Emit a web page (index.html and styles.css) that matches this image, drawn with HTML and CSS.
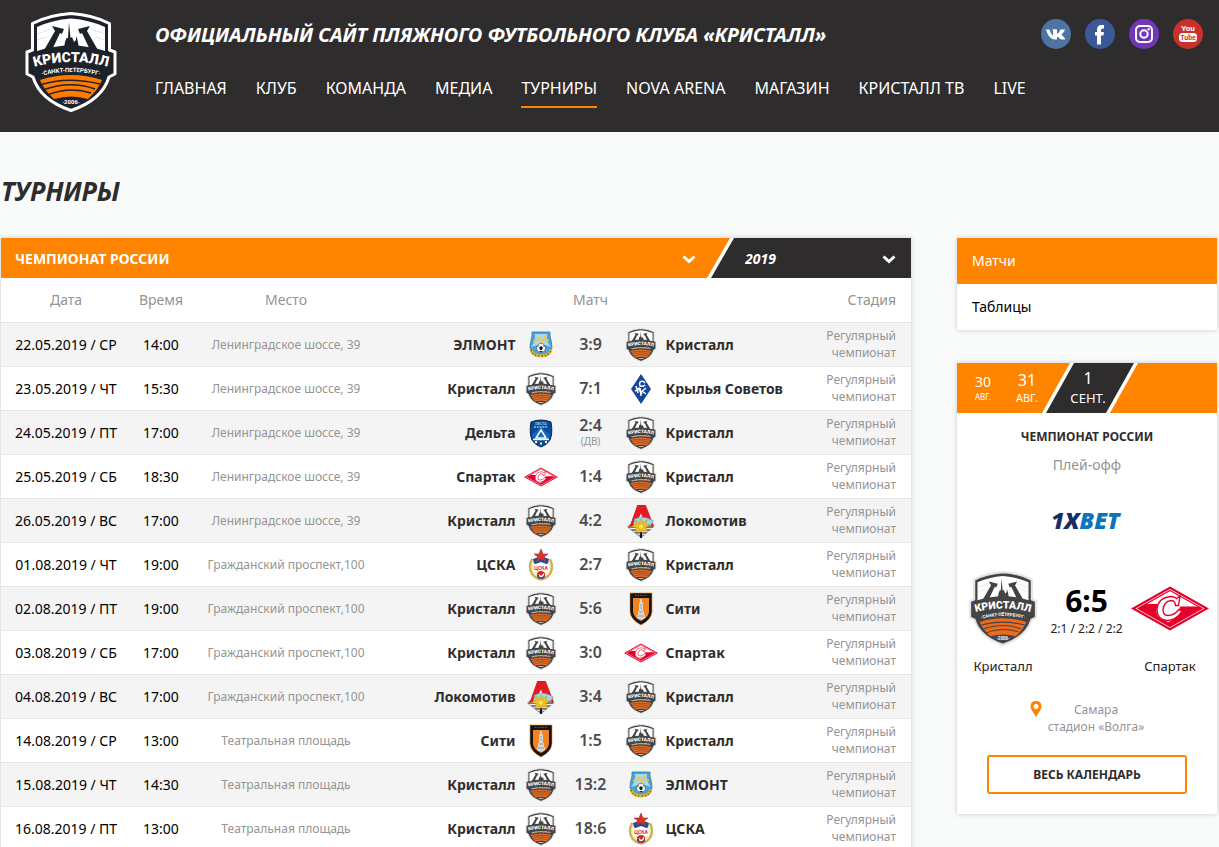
FILE: index.html
```html
<!DOCTYPE html>
<html lang="ru">
<head>
  <meta charset="UTF-8">
  <meta name="viewport" content="width=device-width, initial-scale=1.0">
  <title>Турниры</title>
  <link rel="stylesheet" href="styles.css">
</head>
<body>

<!-- club logos -->
<svg class="sprite" aria-hidden="true">
  <symbol id="kristall" viewBox="0 0 92 100">
    <path d="M46 1.500 Q24 3 7.500 11.500 L7.500 38 L2 40 L2 62 L8 65 Q15 88 46 98.500 Q77 88 84 65 L90 62 L90 40 L84.500 38 L84.500 11.500 Q68 3 46 1.500Z" fill="currentColor" stroke="var(--rim)" stroke-width="3" stroke-linejoin="round"/>
    <path d="M46 6.500 Q27 8 12 15 L12 39 Q46 28 80 39 L80 15 Q65 8 46 6.500Z" fill="#fff"/>
    <path d="M12 22 L26 17 M12 28 L22 25 M80 22 L66 17 M80 28 L70 25" stroke="#ddd" stroke-width=".8"/>
    <path d="M27 14 L39 17 L37 22 L35 21 L27 38 L18 40 L30 19Z M65 14 L53 17 L55 22 L57 21 L65 38 L74 40 L62 19Z" fill="currentColor"/>
    <path d="M39 36 L40 30 L41.500 26 L43 26 L44 10 L45.500 26 L47 25 L49 30 L51 28 L51 24 L52.500 28 L54 36Z" fill="currentColor"/>
    <path id="arc-name" d="M5 56 Q46 44 87 56" fill="none"/>
    <path id="arc-city" d="M12 65 Q46 55 80 65" fill="none"/>
    <text class="crest-name"><textPath href="#arc-name" startOffset="50%">КРИСТАЛЛ</textPath></text>
    <text class="crest-city"><textPath href="#arc-city" startOffset="50%">·САНКТ-ПЕТЕРБУРГ·</textPath></text>
    <path d="M15 68 Q46 58 77 68 Q73 78 63 87 Q46 82 29 87 Q19 78 15 68Z" fill="var(--sand)"/>
    <path d="M15 73 Q42 64 75 72 M18 78 Q45 68 70 77 M22 83 Q45 74 66 81" fill="none" stroke="currentColor" stroke-width="1.500"/>
    <text class="crest-year" x="46" y="92">·2006·</text>
  </symbol>

  <symbol id="spartak" viewBox="0 0 78 44">
    <path d="M39 0 L78 22 L39 44 L0 22Z" fill="#e4002b"/>
    <path d="M39 2.500 L73.500 22 L39 41.500 L4.500 22Z" fill="#fff"/>
    <path d="M39 4 L71 22 L39 40 L7 22Z" fill="none" stroke="#e4002b" stroke-width="1.200"/>
    <path d="M15 17.500 H27 Q23 27 29 32 L36 35 L39 40 L7 22Z M49 20 L68 20 L71 22 L39 40 L33 36.500 Q46 35 49 20Z" fill="#e4002b"/>
    <path d="M49 9.500 L47.500 19 L44.500 19 Q44 14 40 14 Q33 15 32 23 Q32 29 37 29 Q43 29 48 23 L51 25 Q45 34 36 34 Q26 33 26 23 Q27 11 40 10 Q43 10 45.500 12Z" fill="#fff" stroke="#e4002b" stroke-width="1.400"/>
  </symbol>

  <symbol id="elmont" viewBox="0 0 30 34">
    <path d="M6 4 L24 4 L24 8 Q26 15 26 20 L21 28 L9 28 L4 20 Q4 15 6 8Z" fill="#4aa3d8" stroke="#2f78a8" stroke-width=".8"/>
    <path d="M9 6 H21 Q20 13 25 19 Q17 15 5 19 Q10 13 9 6Z" fill="#a6d8f2"/>
    <path d="M7 13 L11 12 L13 9 L16 15 L19 8 L20 12 L23 12" fill="none" stroke="#f3c928" stroke-width="1.300"/>
    <circle cx="15" cy="20" r="4.500" fill="#fff" stroke="#222" stroke-width=".5"/>
    <path d="M15 18 L17 19.500 L16 22 H14 L13 19.500Z M11 18 L13 17 L12 19Z M19 18 L17 17 L18 19Z M13 24 L14 23 H16 L17 24Z" fill="#222"/>
    <path d="M5 22 Q7 28 15 28 Q23 28 25 22" fill="none" stroke="#e5b92e" stroke-width="3"/>
    <path d="M5 22 Q7 28 15 28 Q23 28 25 22" fill="none" stroke="#554a20" stroke-width="1.200" stroke-dasharray="1.200 2"/>
  </symbol>

  <symbol id="krylya" viewBox="0 0 30 34">
    <path d="M15 2 L25 17 L15 32 L5 17Z" fill="#13479f"/>
    <path d="M19 11 Q17 8 14 10 Q13 12 14 14 Q17 15 19 13 M10 14 L12 21 M12 16 L16 22 M9 19 L14 16 M14 16 L15 24 M15 20 L20 16 M16 19 L20 22" fill="none" stroke="#fff" stroke-width="1.500"/>
  </symbol>

  <symbol id="delta" viewBox="0 0 30 34">
    <path d="M5 6 Q15 2 25 6 Q27 17 24 24 Q21 29 15 31 Q9 29 6 24 Q3 17 5 6Z" fill="#0a4a98" stroke="#06264f"/>
    <path d="M6 18 Q11 16 15 10 Q20 17 24 18 L23 23 H7Z" fill="#1668b8"/>
    <text class="crest-delta" x="15" y="9">DELTA</text>
    <path d="M8 11 H22" stroke="#8fc3ee" stroke-width="1.500" stroke-dasharray="2 .8"/>
    <path d="M15 14 L20 22 H10Z" fill="none" stroke="#fff" stroke-width="1.500"/>
    <path d="M7 23.500 H23" stroke="#fff" stroke-width="1.500"/>
    <path d="M9 26 H11 M14 27.500 H16 M19 26 H21" stroke="#fff" stroke-width="1.800"/>
  </symbol>

  <symbol id="lokomotiv" viewBox="0 0 30 36">
    <path d="M11 1 H20 L29 24 H20 L15 10 L10 20 L8 24 H1 L4 21Z" fill="#e21a22"/>
    <path d="M0 24 L11 23 H20 L29 24 L15 36Z" fill="#75787b"/>
    <path d="M3 26 H27 M7 29 H23 M11 32 H19" stroke="#fff"/>
    <path d="M8 16 Q18 11 28 18 L25 23 H7Z" fill="#9bd8e7" stroke="#5d9aae" stroke-width=".6"/>
    <path d="M15 16 L17 20 L21 17 L20 22 L25 22 L20 25 L22 29 L17 28 L15 32 L13 28 L9 30 L10 25 L5 24 L10 21 L9 17 L13 20Z" fill="#f5c21c" stroke="#c98a12" stroke-width=".5"/>
    <circle cx="15" cy="24" r="3" fill="#ffe15a" stroke="#b77d10" stroke-width=".5"/>
    <path d="M15 30 V36" stroke="#111" stroke-width="2"/>
  </symbol>

  <symbol id="cska" viewBox="0 0 30 34">
    <path d="M6 11 Q2 19 6 26 Q9 30 15 31.500 Q21 30 24 26 Q28 19 24 11" fill="#f6edc2" stroke="#d9bc62" stroke-width="2.500"/>
    <path d="M6 11 Q2 19 6 26 Q9 30 15 31.500 Q21 30 24 26 Q28 19 24 11" fill="none" stroke="#a8832a" stroke-dasharray="1 1.500"/>
    <path d="M7 11 L15 8 L23 11 L22 15 L15 21 L8 15Z" fill="#17509c"/>
    <path d="M7 17 L15 14 L23 17 V24 H7Z" fill="#fff"/>
    <path d="M15 1 L17 6 H22 L18 9 L20 14 L15 11 L10 14 L12 9 L8 6 H13Z" fill="#dd2f25" stroke="#8f3a30" stroke-width=".6"/>
    <text class="crest-cska" x="15" y="22">ЦСКА</text>
    <circle cx="15" cy="27" r="4" fill="#d9252a"/>
    <path d="M12 29 L13 26 L15 28 L18 25 V29Z" fill="#fff"/>
    <path d="M11 27 Q11 30 14 31 L13 27Z M19 27 Q19 30 16 31 L17 28Z" fill="#17509c"/>
  </symbol>

  <symbol id="city" viewBox="0 0 30 34">
    <path d="M4 1 H26 V20 Q25 28 15 33 Q5 28 4 20Z" fill="#151515" stroke="#f0821e" stroke-width=".6"/>
    <path d="M7 6 H23 V20 Q22 26 15 29 Q8 26 7 20Z" fill="#f58220"/>
    <path d="M9 3.500 H21" stroke="#655" stroke-dasharray="1.500 1"/>
    <path d="M14 7 H16 V10 L17 11 V19 H18 V23 H19 V26 L15 28 L11 26 V23 H12 V19 H13 V11 L14 10Z" fill="#d9d9d9"/>
    <path d="M14 13 H16 M14 16 H16 M13 20 H17 M12 24 H18" stroke="#777" stroke-width=".7"/>
  </symbol>

  <symbol id="chevron" viewBox="0 0 14 9">
    <path d="M1.500 1.500 L7 6.500 L12.500 1.500" fill="none" stroke="#fff" stroke-width="3"/>
  </symbol>
</svg>

<header class="header">
  <a href="#" class="logo" aria-label="Кристалл">
    <svg><use href="#kristall"/></svg>
  </a>
  <div class="header-body">
    <div class="header-top">
      <p class="slogan">ОФИЦИАЛЬНЫЙ САЙТ ПЛЯЖНОГО ФУТБОЛЬНОГО КЛУБА «КРИСТАЛЛ»</p>
      <div class="social">
        <a href="#" aria-label="ВКонтакте">
          <svg viewBox="0 0 30 30">
            <circle cx="15" cy="15" r="15" fill="#4c75a3"/>
            <path d="M5 10.500 H8.500 C9.500 14 11 16 12 16.500 V12.500 C12 11.500 11.500 11 11 10.800 C11.500 10 15.500 10 16 10.500 V15 C17.500 14.500 18.500 12 19.500 10.500 H23.300 C24.500 10.500 23.500 12.500 20.500 15.500 C21.500 17 24.500 19 24 20.500 H20.500 C19 20.500 17.800 18 16 17.800 V20.500 H14 C9.500 20.500 6.500 16 5 10.500Z" fill="#fff"/>
          </svg>
        </a>
        <a href="#" aria-label="Facebook">
          <svg viewBox="0 0 30 30">
            <circle cx="15" cy="15" r="15" fill="#3b5998"/>
            <path d="M19 6 V9.500 H17.500 Q16 9.500 16 11 V13 H19 L18.500 16.500 H16 V25.500 H12 V16.500 H10 V13 H12 V10.500 Q12 6 16.500 6Z" fill="#fff"/>
          </svg>
        </a>
        <a href="#" aria-label="Instagram">
          <svg viewBox="0 0 30 30">
            <circle cx="15" cy="15" r="15" fill="#7038b8"/>
            <rect x="7" y="7" width="16" height="16" rx="4" fill="none" stroke="#fff" stroke-width="2"/>
            <circle cx="15" cy="15" r="3.700" fill="none" stroke="#fff" stroke-width="2"/>
            <circle cx="19.700" cy="10.300" r="1.200" fill="#fff"/>
          </svg>
        </a>
        <a href="#" aria-label="YouTube">
          <svg viewBox="0 0 30 30">
            <circle cx="15" cy="15" r="15" fill="#c8312b"/>
            <text class="yt-you" x="15" y="12">You</text>
            <rect x="6" y="14" width="18" height="9" rx="3.500" fill="#fff"/>
            <text class="yt-tube" x="15" y="21">Tube</text>
          </svg>
        </a>
      </div>
    </div>
    <nav class="nav">
      <a href="#">ГЛАВНАЯ</a>
      <a href="#">КЛУБ</a>
      <a href="#">КОМАНДА</a>
      <a href="#">МЕДИА</a>
      <a href="#" class="active">ТУРНИРЫ</a>
      <a href="#">NOVA ARENA</a>
      <a href="#">МАГАЗИН</a>
      <a href="#">КРИСТАЛЛ ТВ</a>
      <a href="#">LIVE</a>
    </nav>
  </div>
</header>

<div class="container">
  <h1>ТУРНИРЫ</h1>
  <div class="columns">
    <main class="games">
      <div class="filters">
        <div class="filter filter-cup">
          <select aria-label="Турнир"><option>ЧЕМПИОНАТ РОССИИ</option></select>
          <svg><use href="#chevron"/></svg>
        </div>
        <div class="filter filter-year">
          <select aria-label="Сезон"><option>2019</option></select>
          <svg><use href="#chevron"/></svg>
        </div>
      </div>
      <table>
        <colgroup>
          <col class="col-date"><col class="col-time"><col class="col-place">
          <col><col class="col-logo"><col class="col-logo"><col class="col-logo"><col>
          <col class="col-stage">
        </colgroup>
        <thead>
          <tr><th>Дата</th><th>Время</th><th>Место</th><th colspan="5">Матч</th><th class="stage">Стадия</th></tr>
        </thead>
        <tbody>
          <tr>
            <td>22.05.2019 / СР</td><td>14:00</td><td class="place">Ленинградское шоссе, 39</td>
            <td class="team home">ЭЛМОНТ</td><td><svg class="crest"><use href="#elmont"/></svg></td>
            <td class="score">3:9</td>
            <td><svg class="crest"><use href="#kristall"/></svg></td><td class="team">Кристалл</td>
            <td class="stage">Регулярный чемпионат</td>
          </tr>
          <tr>
            <td>23.05.2019 / ЧТ</td><td>15:30</td><td class="place">Ленинградское шоссе, 39</td>
            <td class="team home">Кристалл</td><td><svg class="crest"><use href="#kristall"/></svg></td>
            <td class="score">7:1</td>
            <td><svg class="crest"><use href="#krylya"/></svg></td><td class="team">Крылья Советов</td>
            <td class="stage">Регулярный чемпионат</td>
          </tr>
          <tr>
            <td>24.05.2019 / ПТ</td><td>17:00</td><td class="place">Ленинградское шоссе, 39</td>
            <td class="team home">Дельта</td><td><svg class="crest"><use href="#delta"/></svg></td>
            <td class="score">2:4<small>(ДВ)</small></td>
            <td><svg class="crest"><use href="#kristall"/></svg></td><td class="team">Кристалл</td>
            <td class="stage">Регулярный чемпионат</td>
          </tr>
          <tr>
            <td>25.05.2019 / СБ</td><td>18:30</td><td class="place">Ленинградское шоссе, 39</td>
            <td class="team home">Спартак</td><td><svg class="crest"><use href="#spartak"/></svg></td>
            <td class="score">1:4</td>
            <td><svg class="crest"><use href="#kristall"/></svg></td><td class="team">Кристалл</td>
            <td class="stage">Регулярный чемпионат</td>
          </tr>
          <tr>
            <td>26.05.2019 / ВС</td><td>17:00</td><td class="place">Ленинградское шоссе, 39</td>
            <td class="team home">Кристалл</td><td><svg class="crest"><use href="#kristall"/></svg></td>
            <td class="score">4:2</td>
            <td><svg class="crest"><use href="#lokomotiv"/></svg></td><td class="team">Локомотив</td>
            <td class="stage">Регулярный чемпионат</td>
          </tr>
          <tr>
            <td>01.08.2019 / ЧТ</td><td>19:00</td><td class="place">Гражданский проспект,100</td>
            <td class="team home">ЦСКА</td><td><svg class="crest"><use href="#cska"/></svg></td>
            <td class="score">2:7</td>
            <td><svg class="crest"><use href="#kristall"/></svg></td><td class="team">Кристалл</td>
            <td class="stage">Регулярный чемпионат</td>
          </tr>
          <tr>
            <td>02.08.2019 / ПТ</td><td>19:00</td><td class="place">Гражданский проспект,100</td>
            <td class="team home">Кристалл</td><td><svg class="crest"><use href="#kristall"/></svg></td>
            <td class="score">5:6</td>
            <td><svg class="crest"><use href="#city"/></svg></td><td class="team">Сити</td>
            <td class="stage">Регулярный чемпионат</td>
          </tr>
          <tr>
            <td>03.08.2019 / СБ</td><td>17:00</td><td class="place">Гражданский проспект,100</td>
            <td class="team home">Кристалл</td><td><svg class="crest"><use href="#kristall"/></svg></td>
            <td class="score">3:0</td>
            <td><svg class="crest"><use href="#spartak"/></svg></td><td class="team">Спартак</td>
            <td class="stage">Регулярный чемпионат</td>
          </tr>
          <tr>
            <td>04.08.2019 / ВС</td><td>17:00</td><td class="place">Гражданский проспект,100</td>
            <td class="team home">Локомотив</td><td><svg class="crest"><use href="#lokomotiv"/></svg></td>
            <td class="score">3:4</td>
            <td><svg class="crest"><use href="#kristall"/></svg></td><td class="team">Кристалл</td>
            <td class="stage">Регулярный чемпионат</td>
          </tr>
          <tr>
            <td>14.08.2019 / СР</td><td>13:00</td><td class="place">Театральная площадь</td>
            <td class="team home">Сити</td><td><svg class="crest"><use href="#city"/></svg></td>
            <td class="score">1:5</td>
            <td><svg class="crest"><use href="#kristall"/></svg></td><td class="team">Кристалл</td>
            <td class="stage">Регулярный чемпионат</td>
          </tr>
          <tr>
            <td>15.08.2019 / ЧТ</td><td>14:30</td><td class="place">Театральная площадь</td>
            <td class="team home">Кристалл</td><td><svg class="crest"><use href="#kristall"/></svg></td>
            <td class="score">13:2</td>
            <td><svg class="crest"><use href="#elmont"/></svg></td><td class="team">ЭЛМОНТ</td>
            <td class="stage">Регулярный чемпионат</td>
          </tr>
          <tr>
            <td>16.08.2019 / ПТ</td><td>13:00</td><td class="place">Театральная площадь</td>
            <td class="team home">Кристалл</td><td><svg class="crest"><use href="#kristall"/></svg></td>
            <td class="score">18:6</td>
            <td><svg class="crest"><use href="#cska"/></svg></td><td class="team">ЦСКА</td>
            <td class="stage">Регулярный чемпионат</td>
          </tr>
        </tbody>
      </table>
    </main>

    <aside class="sidebar">
      <nav class="side-menu">
        <a href="#" class="active">Матчи</a>
        <a href="#">Таблицы</a>
      </nav>

      <section class="match-card">
        <div class="days">
          <button type="button" class="day day-far"><b>30</b>АВГ.</button>
          <button type="button" class="day"><b>31</b>АВГ.</button>
          <button type="button" class="day day-active"><b>1</b>СЕНТ.</button>
        </div>
        <h2>ЧЕМПИОНАТ РОССИИ</h2>
        <p class="round">Плей-офф</p>
        <svg class="sponsor" viewBox="0 0 72 20">
          <text x="0" y="18"><tspan class="bet-dark">1X</tspan><tspan class="bet-light">BET</tspan></text>
        </svg>
        <div class="versus">
          <div class="side">
            <svg><use href="#kristall"/></svg>
            <span>Кристалл</span>
          </div>
          <div class="result">
            <strong>6:5</strong>
            <span>2:1 / 2:2 / 2:2</span>
          </div>
          <div class="side">
            <svg><use href="#spartak"/></svg>
            <span>Спартак</span>
          </div>
        </div>
        <div class="arena">
          <svg viewBox="0 0 12 16"><path d="M6 0 Q11.500 0 11.500 5.500 Q11.500 8 8.500 12 L6 16 L3.500 12 Q.5 8 .5 5.500 Q.5 0 6 0Z M6 3 A2.500 2.500 0 1 0 6 8 A2.500 2.500 0 1 0 6 3Z" fill="#ff8400" fill-rule="evenodd"/></svg>
          <p>Самара<br>стадион «Волга»</p>
        </div>
        <a href="#" class="btn">ВЕСЬ КАЛЕНДАРЬ</a>
      </section>
    </aside>
  </div>
</div>

</body>
</html>
```
FILE: styles.css
```css
:root {
  --orange: #ff8400;
  --dark: #2f2c2d;
  --grey: #949494;
  --rim: #e4e4e4;
  --sand: #ec6c1c;
}
* {
  box-sizing: border-box;
}
body {
  margin: 0;
  font-family: "Noto Sans", "Open Sans", sans-serif;
  font-size: 14px;
  color: #000;
  background: #f9fbfb;
}
a {
  color: inherit;
  text-decoration: none;
}
p, h1, h2 {
  margin: 0;
}
svg {
  display: block;
  overflow: visible;
}
.sprite {
  position: absolute;
  width: 0;
  height: 0;
}
symbol {
  overflow: visible;
}

/* text inside the logos */
.crest-name {
  font: 900 14px Roboto, sans-serif;
  fill: #fff;
  text-anchor: middle;
}
.crest-city {
  font: bold 6px Roboto, sans-serif;
  fill: #fff;
  text-anchor: middle;
}
.crest-year {
  font: bold 6px Roboto, sans-serif;
  fill: #fff;
  text-anchor: middle;
}
.crest-delta {
  font: bold 4px Roboto, sans-serif;
  fill: #8fc3ee;
  text-anchor: middle;
}
.crest-cska {
  font: bold 5px Roboto, sans-serif;
  fill: #d9252a;
  text-anchor: middle;
}

/* header */
.header {
  display: flex;
  gap: 38px;
  height: 132px;
  padding: 12px 16px 0 25px;
  color: #fff;
  background: var(--dark);
}
.logo {
  --rim: #fff;
  --sand: #ff7a00;
  color: #1d2129;
}
.logo svg {
  width: 92px;
  height: 100px;
}
.header-body {
  flex: 1;
}
.header-top {
  display: flex;
  justify-content: space-between;
  align-items: center;
  height: 44px;
}
.slogan {
  font-size: 20px;
  font-weight: 700;
  font-style: italic;
}
.social {
  display: flex;
  gap: 14px;
}
.social svg {
  width: 30px;
  height: 30px;
}
.yt-you {
  font: bold 8px Roboto, sans-serif;
  fill: #fff;
  text-anchor: middle;
}
.yt-tube {
  font: bold 7px Roboto, sans-serif;
  fill: #c8312b;
  text-anchor: middle;
}
.nav {
  display: flex;
  gap: 29px;
  margin-top: 16px;
  font-size: 16px;
  line-height: 32px;
}
.nav .active {
  height: 36px;
  border-bottom: 2px solid var(--orange);
}

/* page */
.container {
  padding: 0 2px 0 1px;
}
h1 {
  padding: 41px 0 29px;
  font-size: 26px;
  font-style: italic;
  line-height: 36px;
  color: var(--dark);
}
.columns {
  display: flex;
  align-items: flex-start;
  gap: 46px;
}
.games {
  flex: 1;
  background: #fff;
  box-shadow: 0 0 5px rgba(0, 0, 0, .2);
}
.filters {
  display: flex;
  background: var(--orange);
}
.filter {
  position: relative;
  height: 40px;
  color: #fff;
}
.filter select {
  position: relative;
  width: 100%;
  height: 100%;
  padding: 0 14px;
  border: 0;
  font: inherit;
  font-weight: 700;
  color: inherit;
  background: none;
  appearance: none;
}
.filter svg {
  position: absolute;
  top: 17px;
  right: 15px;
  width: 14px;
  height: 9px;
  pointer-events: none;
}
.filter-cup {
  flex: 1;
}
.filter-cup svg {
  right: 11px;
}
.filter-year {
  width: 204px;
  background: #fff;
  clip-path: polygon(23px 0, 100% 0, 100% 100%, 0 100%);
}
.filter-year::before {
  content: "";
  position: absolute;
  inset: 0;
  background: var(--dark);
  clip-path: polygon(27px 0, 100% 0, 100% 100%, 4px 100%);
}
.filter-year select {
  padding-left: 38px;
  font-style: italic;
}

table {
  width: 100%;
  table-layout: fixed;
  border-collapse: separate;
  border-spacing: 0;
}
.col-date {
  width: 130px;
}
.col-time {
  width: 60px;
}
.col-place {
  width: 190px;
}
.col-logo {
  width: 50px;
}
.col-stage {
  width: 111px;
}
th, td {
  height: 44px;
  padding: 0;
  text-align: center;
}
th {
  padding-bottom: 2px;
  font-weight: 400;
  color: var(--grey);
}
td {
  border-top: 1px solid #e6e6e6;
}
tbody tr:nth-child(odd) {
  background: #f4f4f4;
}
.place {
  font-size: 12px;
  color: var(--grey);
}
.team {
  font-weight: 700;
  text-align: left;
  white-space: nowrap;
  color: var(--dark);
}
.home {
  text-align: right;
}
.score {
  font-size: 16px;
  font-weight: 600;
  line-height: 17px;
  color: #4c4c4c;
}
.score small {
  display: block;
  font-size: 10px;
  font-weight: 400;
  line-height: 14px;
  color: var(--grey);
}
.stage {
  padding-right: 15px;
  text-align: right;
}
td.stage {
  padding-bottom: 2px;
  font-size: 12px;
  line-height: 17px;
  color: var(--grey);
}
.crest {
  width: 34px;
  height: 34px;
  margin: 0 auto;
  color: #444;
}

/* sidebar */
.sidebar {
  width: 260px;
}
.side-menu, .match-card {
  background: #fff;
  box-shadow: 0 0 5px rgba(0, 0, 0, .2);
}
.side-menu a {
  display: block;
  padding-left: 15px;
  line-height: 46px;
}
.side-menu .active {
  color: #fff;
  background: var(--orange);
}
.match-card {
  margin-top: 33px;
  padding-bottom: 20px;
  text-align: center;
}
.days {
  display: flex;
  height: 50px;
  background: var(--orange);
}
.day {
  width: 36px;
  padding: 0;
  border: 0;
  font: inherit;
  font-size: 11px;
  line-height: 16px;
  color: #fff;
  background: none;
}
.day b {
  display: block;
  font-size: 16px;
  font-weight: 400;
  line-height: 20px;
}
.day-far {
  width: 52px;
  font-size: 8px;
  line-height: 12px;
}
.day-far b {
  font-size: 14px;
  line-height: 18px;
}
.day-active {
  position: relative;
  z-index: 0;
  width: 96px;
  margin-left: -3px;
  padding-right: 4px;
  font-size: 13px;
  line-height: 20px;
  background: #fff;
  clip-path: polygon(28px 0, 100% 0, calc(100% - 28px) 100%, 0 100%);
}
.day-active::before {
  content: "";
  position: absolute;
  z-index: -1;
  inset: 0;
  background: var(--dark);
  clip-path: polygon(32px 0, calc(100% - 4px) 0, calc(100% - 32px) 100%, 4px 100%);
}
.match-card h2 {
  margin-top: 14px;
  font-size: 12px;
  font-weight: 700;
  line-height: 20px;
  color: var(--dark);
}
.round {
  margin-top: 8px;
  line-height: 20px;
  color: var(--grey);
}
.sponsor {
  width: 72px;
  height: 20px;
  margin: 36px auto 40px;
  font: italic 800 23px "Open Sans", sans-serif;
}
.bet-dark {
  fill: #182c66;
}
.bet-light {
  fill: #0b74bd;
}
.versus {
  display: flex;
  justify-content: space-between;
  padding: 0 8px 0 7px;
}
.side {
  width: 78px;
  font-size: 13px;
  color: #444;
}
.side svg {
  width: 78px;
  height: 75px;
}
.side span {
  display: block;
  margin-top: 10px;
  line-height: 20px;
  color: #222;
}
.result {
  padding-top: 10px;
  font-size: 12px;
  line-height: 16px;
  color: #222;
}
.result strong {
  display: block;
  font-size: 30px;
  line-height: 40px;
  color: #000;
}
.arena {
  display: flex;
  justify-content: center;
  gap: 6px;
  margin-top: 25px;
  font-size: 12px;
  line-height: 17px;
  color: var(--grey);
}
.arena svg {
  width: 12px;
  height: 16px;
}
.btn {
  display: block;
  margin: 20px 30px 0;
  border: 2px solid var(--orange);
  border-radius: 3px;
  font-size: 12px;
  font-weight: 700;
  line-height: 35px;
  color: var(--dark);
}
```
